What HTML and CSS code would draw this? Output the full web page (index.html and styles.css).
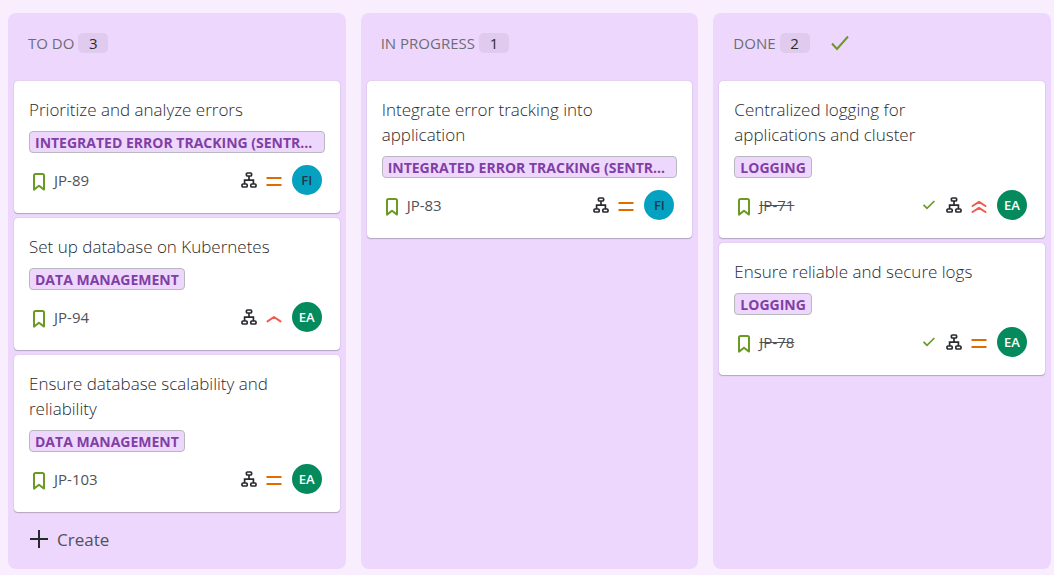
FILE: index.html
```html
<!DOCTYPE html>
<html lang="en">
<head>
<meta charset="utf-8">
<title>Board</title>
<link rel="stylesheet" href="styles.css">
</head>
<body>
<svg class="sprite" aria-hidden="true">
  <symbol id="story" viewBox="0 0 12 18"><path d="M1 16.6V2.6Q1 1 2.6 1H9.4Q11 1 11 2.6V16.6L6 12.8Z" fill="none" stroke="#6a9a23" stroke-width="2" stroke-linejoin="round"/></symbol>
  <symbol id="tree" viewBox="0 0 16 16"><g fill="none" stroke="#292a2e" stroke-width="1.7"><rect x="5.4" y="1" width="5.2" height="3" rx="1"/><rect x="1" y="12" width="5.2" height="3" rx="1"/><rect x="9.8" y="12" width="5.2" height="3" rx="1"/><path d="M8 4V8.2M3.6 12V8.2H12.4V12"/></g></symbol>
  <symbol id="medium" viewBox="0 0 16 16"><path d="M0.5 5H15.5M0.5 12H15.5" fill="none" stroke="#e06c00" stroke-width="2"/></symbol>
  <symbol id="high" viewBox="0 0 16 16"><path d="M1.5 11.4L8 7L14.5 11.4" fill="none" stroke="#f15b50" stroke-width="2" stroke-linecap="round" stroke-linejoin="round"/></symbol>
  <symbol id="highest" viewBox="0 0 16 16"><path d="M1.5 8L8 3.8L14.5 8M1.5 14L8 9.8L14.5 14" fill="none" stroke="#f15b50" stroke-width="2" stroke-linecap="round" stroke-linejoin="round"/></symbol>
  <symbol id="check" viewBox="0 0 18 16"><path d="M1 8.5L6 14L17 1.5" fill="none" stroke="#6a9a23" stroke-width="2"/></symbol>
  <symbol id="check-small" viewBox="0 0 12 10"><path d="M0.6 4.8L4 8.4L11.4 1" fill="none" stroke="#6a9a23" stroke-width="1.7"/></symbol>
  <symbol id="plus" viewBox="0 0 18 18"><path d="M9 0V18M0 9H18" fill="none" stroke="#292a2e" stroke-width="2"/></symbol>
</svg>
<main class="board">
  <section class="column">
    <header class="column-header"><h2 class="column-title">TO DO</h2><span class="count">3</span></header>
    <div class="cards">
      <article class="card">
        <h3 class="card-title">Prioritize and analyze errors</h3>
        <span class="tag tag-wide">INTEGRATED ERROR TRACKING (SENTR...</span>
        <footer class="card-footer">
          <svg class="story"><use href="#story"/></svg><a class="key" href="#JP-89">JP-89</a>
          <svg class="icon"><use href="#tree"/></svg><svg class="icon priority"><use href="#medium"/></svg><span class="avatar avatar-fi">FI</span>
        </footer>
      </article>
      <article class="card">
        <h3 class="card-title">Set up database on Kubernetes</h3>
        <span class="tag">DATA MANAGEMENT</span>
        <footer class="card-footer">
          <svg class="story"><use href="#story"/></svg><a class="key" href="#JP-94">JP-94</a>
          <svg class="icon"><use href="#tree"/></svg><svg class="icon priority"><use href="#high"/></svg><span class="avatar">EA</span>
        </footer>
      </article>
      <article class="card">
        <h3 class="card-title">Ensure database scalability and reliability</h3>
        <span class="tag">DATA MANAGEMENT</span>
        <footer class="card-footer">
          <svg class="story"><use href="#story"/></svg><a class="key" href="#JP-103">JP-103</a>
          <svg class="icon"><use href="#tree"/></svg><svg class="icon priority"><use href="#medium"/></svg><span class="avatar">EA</span>
        </footer>
      </article>
    </div>
    <button class="create" type="button"><svg class="plus"><use href="#plus"/></svg>Create</button>
  </section>
  <section class="column">
    <header class="column-header"><h2 class="column-title">IN PROGRESS</h2><span class="count">1</span></header>
    <div class="cards">
      <article class="card">
        <h3 class="card-title">Integrate error tracking into application</h3>
        <span class="tag tag-wide">INTEGRATED ERROR TRACKING (SENTR...</span>
        <footer class="card-footer">
          <svg class="story"><use href="#story"/></svg><a class="key" href="#JP-83">JP-83</a>
          <svg class="icon"><use href="#tree"/></svg><svg class="icon priority"><use href="#medium"/></svg><span class="avatar avatar-fi">FI</span>
        </footer>
      </article>
    </div>
  </section>
  <section class="column">
    <header class="column-header"><h2 class="column-title">DONE</h2><span class="count">2</span><svg class="done"><use href="#check"/></svg></header>
    <div class="cards">
      <article class="card">
        <h3 class="card-title">Centralized logging for applications and cluster</h3>
        <span class="tag">LOGGING</span>
        <footer class="card-footer">
          <svg class="story"><use href="#story"/></svg><a class="key key-done" href="#JP-71">JP-71</a>
          <svg class="resolved"><use href="#check-small"/></svg><svg class="icon"><use href="#tree"/></svg><svg class="icon priority"><use href="#highest"/></svg><span class="avatar">EA</span>
        </footer>
      </article>
      <article class="card">
        <h3 class="card-title">Ensure reliable and secure logs</h3>
        <span class="tag">LOGGING</span>
        <footer class="card-footer">
          <svg class="story"><use href="#story"/></svg><a class="key key-done" href="#JP-78">JP-78</a>
          <svg class="resolved"><use href="#check-small"/></svg><svg class="icon"><use href="#tree"/></svg><svg class="icon priority"><use href="#medium"/></svg><span class="avatar">EA</span>
        </footer>
      </article>
    </div>
  </section>
</main>
</body>
</html>
```
FILE: styles.css
```css
* { box-sizing: border-box; }
body {
  margin: 0;
  background: #f8eefe;
  color: #292a2e;
  font-family: "Open Sans", "Noto Sans", sans-serif;
}
svg { display: block; flex: none; }
.sprite { position: absolute; width: 0; height: 0; }
.board {
  display: grid;
  grid-template-columns: repeat(3, minmax(0, 1fr));
  gap: 15px;
  min-height: 100vh;
  padding: 13px 3px 6px 8px;
}
.column {
  padding: 0 6px 6px;
  border-radius: 8px;
  background: #eed7fc;
}
.column-header {
  display: flex;
  align-items: center;
  height: 60px;
  margin-bottom: 8px;
  padding: 0 14px;
}
.column-title {
  margin: 0;
  color: #6b6e76;
  font-size: 15px;
  font-weight: 400;
}
.count {
  width: 30px;
  margin-left: 4px;
  border-radius: 5px;
  background: #e0caed;
  font-size: 15px;
  font-weight: 400;
  line-height: 20px;
  text-align: center;
}
.done { width: 18px; height: 16px; margin-left: 21px; }
.cards { display: flex; flex-direction: column; gap: 5px; }
.card {
  display: flex;
  flex-direction: column;
  align-items: flex-start;
  padding: 16px 15px 18px;
  border-radius: 4px;
  background: #fff;
  box-shadow: 0 1px 1px rgba(30, 31, 33, 0.25), 0 0 1px rgba(30, 31, 33, 0.31);
}
.card-title {
  margin: 0 0 9px;
  padding-right: 45px;
  font-size: 17px;
  font-weight: 350;
  line-height: 25px;
}
.tag {
  max-width: 100%;
  padding: 1px 5px 0;
  overflow: hidden;
  border: 1px solid #b7b9be;
  border-radius: 4px;
  background: #eed7fc;
  color: #803fa5;
  font-size: 14px;
  font-weight: 700;
  line-height: 19px;
  text-overflow: ellipsis;
  white-space: nowrap;
}
.tag-wide { width: 100%; }
.card-footer {
  display: flex;
  align-items: center;
  align-self: stretch;
  gap: 9px;
  height: 30px;
  margin-top: 12px;
  padding: 0 3px 0 4px;
}
.story { width: 12px; height: 18px; margin-top: 4px; }
.key {
  margin-right: auto;
  color: #505258;
  font-size: 15px;
  font-weight: 400;
  text-decoration: none;
}
.key-done { text-decoration: line-through; }
.icon { width: 16px; height: 16px; }
.priority { margin: 2px 1px 0 0; }
.resolved { width: 12px; height: 10px; margin-right: 2px; }
.avatar {
  width: 30px;
  border-radius: 50%;
  background: #048a5c;
  color: #fff;
  font-size: 13px;
  font-weight: 600;
  line-height: 30px;
  text-align: center;
}
.avatar-fi { background: #04a2c0; color: #1c3a4e; }
.create {
  display: flex;
  align-items: center;
  gap: 9px;
  width: 100%;
  height: 44px;
  margin-top: 5px;
  padding: 0 16px;
  border: 0;
  background: none;
  color: #505258;
  font: 500 17px "Open Sans", "Noto Sans", sans-serif;
}
.plus { width: 18px; height: 18px; }
```
